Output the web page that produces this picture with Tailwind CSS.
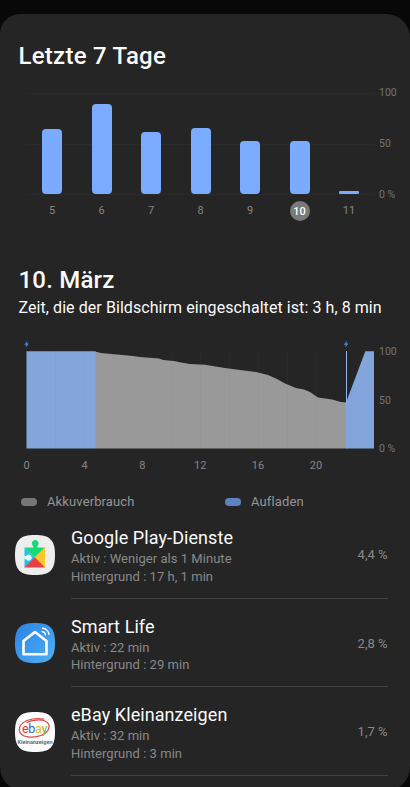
<!DOCTYPE html>
<html lang="de">
  <head>
    <meta charset="UTF-8" />
    <meta name="viewport" content="width=device-width, initial-scale=1.0" />
    <title>Akkuverbrauch</title>
    <script src="https://cdn.jsdelivr.net/npm/@tailwindcss/browser@4"></script>
  </head>
  <body class="bg-[#080808] font-['Roboto',sans-serif] text-[#fafafa]">
    <div class="h-[787px] w-[410px] overflow-hidden pt-[14px]">
      <main class="h-[777px] rounded-[24px] rounded-tl-[20px] bg-[#252525] pt-[26px]">
        <h1 class="pl-[18.5px] text-[24px] leading-8 font-medium tracking-[0.26px]">Letzte 7 Tage</h1>

        <!-- Last 7 days -->
        <section class="mt-[21px] h-[171px]">
          <div class="flex h-[102px]">
            <div class="ml-[27px] flex w-[347px] items-end justify-between border-y border-[#2a2a2a] bg-[linear-gradient(#2a2a2a,#2a2a2a)] bg-[length:100%_1px] bg-center bg-no-repeat pr-[15px] pl-[15px]">
              <div class="h-[65px] w-5 rounded-[4px] bg-[#7aabff]"></div>
              <div class="h-[90px] w-5 rounded-[4px] bg-[#7aabff]"></div>
              <div class="h-[62px] w-5 rounded-[4px] bg-[#7aabff]"></div>
              <div class="h-[66px] w-5 rounded-[4px] bg-[#7aabff]"></div>
              <div class="h-[53px] w-5 rounded-[4px] bg-[#7aabff]"></div>
              <div class="h-[53px] w-5 rounded-[4px] bg-[#7aabff]"></div>
              <div class="h-[3px] w-5 rounded-[1px] bg-[#7aabff]"></div>
            </div>
            <div class="-my-[7px] ml-[5px] flex flex-col justify-between text-[10.5px] leading-[14px] text-[#747474]">
              <span>100</span>
              <span>50</span>
              <span>0 %</span>
            </div>
          </div>
          <div class="mt-[5px] ml-[42px] flex w-[317px] items-center justify-between text-center text-[11px] leading-[21px] text-[#858585]">
            <span class="w-5">5</span>
            <span class="w-5">6</span>
            <span class="w-5">7</span>
            <span class="w-5">8</span>
            <span class="w-5">9</span>
            <span class="h-5 w-5 rounded-full bg-[#7a7a7a] font-medium text-white">10</span>
            <span class="w-5">11</span>
          </div>
        </section>

        <h2 class="pl-[18.5px] text-[24px] leading-8 font-medium tracking-[0.2px]">10. März</h2>
        <p class="pl-[18.5px] text-[16px] leading-6 tracking-[0.07px] whitespace-nowrap">Zeit, die der Bildschirm eingeschaltet ist: 3 h, 8 min</p>

        <!-- Battery level over the day -->
        <svg class="block" width="410" height="160" viewBox="0 320 410 160">
          <path stroke="#292929" d="M142.5 351V448M171.5 351V448M200.5 351V448M229.5 351V448M258.5 351V448M287.5 351V448M316.5 351V448" />
          <path fill="#999" d="M95 448.5V351.5L101 353L117 354.5L133 356L140 357L159 358.5L163 360L174 361L181 362.5L190 364L205 364.8L225 368L240 370L256 372L268 375L277 379L285 383.5L296 388L304 389.5L310 392L318 397.5L332 399.5L341 402L347 402.5V448.5Z" />
          <path fill="#84a5db" d="M26.5 351.2H95.5V448.5H26.5ZM346 448.5V402L347 400L356 376L365.3 351.2H374V448.5Z" />
          <path stroke="#8fb4ee" d="M346.5 351V404" />
          <path stroke="#000" stroke-opacity=".015" d="M55.5 351V448M84.5 354V448M113.5 354V448M142.5 357V448M171.5 361V448M200.5 365V448M229.5 368V448M258.5 373V448M287.5 385V448M316.5 397V448" />
          <g fill="#4b87cf">
            <path d="M27.5 340.8L24.2 344.8H26.2L25.7 347.6L29 343.6H27Z" />
            <path d="M347 340.8L343.7 344.8H345.7L345.2 347.6L348.5 343.6H346.5Z" />
          </g>
          <g fill="#747474" font-size="10.5">
            <text x="379" y="355">100</text>
            <text x="379" y="403.5">50</text>
            <text x="379" y="452">0 %</text>
          </g>
          <g fill="#858585" font-size="11" text-anchor="middle">
            <text x="26.5" y="469">0</text>
            <text x="84.5" y="469">4</text>
            <text x="142.3" y="469">8</text>
            <text x="200.2" y="469">12</text>
            <text x="258" y="469">16</text>
            <text x="316" y="469">20</text>
          </g>
        </svg>

        <div class="flex h-[30px] items-center pt-[14px] pl-[20.5px] text-[13px] leading-4 tracking-[0.12px] text-[#959595]">
          <span class="h-2 w-4 rounded-full bg-[#777]"></span>
          <span class="ml-[10.5px] w-[177.5px]">Akkuverbrauch</span>
          <span class="h-2 w-4 rounded-full bg-[#5d82c2]"></span>
          <span class="ml-[10.5px]">Aufladen</span>
        </div>

        <!-- Apps -->
        <ul>
          <li class="flex h-[88.5px] pr-[22.5px] pl-[14.5px]">
            <svg class="mt-[24.5px] h-10 w-10 shrink-0" viewBox="0 0 40 40">
              <path fill="#eee" d="M20 0C35 0 40 5 40 20S35 40 20 40S0 35 0 20S5 0 20 0Z" />
              <path fill="#22bfe6" d="M9.5 12.5L20 22.5L9.5 33Z" />
              <path fill="#16d977" d="M9.5 12.5H18.2V11.2A3.4 3.4 0 1 1 22.2 11.2V12.5H30L20 22.5Z" />
              <path fill="#ffc629" d="M30 12.5V33L19.5 22.5Z" />
              <path fill="#e93d4a" d="M9.5 32.5L19.8 22.2L30 32.5Z" />
              <path fill="#e6fbff" d="M9.3 21H11A3.1 3.1 0 1 1 11 24.2H9.3Z" />
            </svg>
            <div class="ml-[16.5px] flex flex-1 border-b border-[#414141] pt-4">
              <div class="flex-1">
                <h3 class="text-[18px] leading-6 tracking-[0.08px]">Google Play-Dienste</h3>
                <p class="text-[13px] leading-[17.7px] tracking-[0.04px] text-[#898989]">Aktiv : Weniger als 1 Minute</p>
                <p class="text-[13px] leading-[17.7px] tracking-[0.04px] text-[#898989]">Hintergrund : 17 h, 1 min</p>
              </div>
              <span class="mt-[21px] text-[13px] leading-4 text-[#898989]">4,4 %</span>
            </div>
          </li>
          <li class="flex h-[88.5px] pr-[22.5px] pl-[14.5px]">
            <svg class="mt-[24.5px] h-10 w-10 shrink-0" viewBox="0 0 40 40">
              <defs>
                <linearGradient id="smart" x1="0" y1="0" x2="1" y2="1">
                  <stop offset="0" stop-color="#2b83e6" />
                  <stop offset="1" stop-color="#4fb0f3" />
                </linearGradient>
              </defs>
              <path fill="url(#smart)" d="M20 0C35 0 40 5 40 20S35 40 20 40S0 35 0 20S5 0 20 0Z" />
              <path fill="none" stroke="#fff" stroke-width="2.6" stroke-linejoin="round" d="M8.5 18L20 9L31.5 18V31.2H8.5Z" />
              <g fill="none" stroke="#fff" stroke-width="1.4" stroke-linecap="round">
                <path d="M27.5 5.3A7 7 0 0 1 34 11.3" />
                <path d="M27 8.6A4 4 0 0 1 30.5 11.8" />
              </g>
            </svg>
            <div class="ml-[16.5px] flex flex-1 border-b border-[#414141] pt-4">
              <div class="flex-1">
                <h3 class="text-[18px] leading-6 tracking-[0.08px]">Smart Life</h3>
                <p class="text-[13px] leading-[17.7px] tracking-[0.04px] text-[#898989]">Aktiv : 22 min</p>
                <p class="text-[13px] leading-[17.7px] tracking-[0.04px] text-[#898989]">Hintergrund : 29 min</p>
              </div>
              <span class="mt-[21px] text-[13px] leading-4 text-[#898989]">2,8 %</span>
            </div>
          </li>
          <li class="flex h-[88.5px] pr-[22.5px] pl-[14.5px]">
            <svg class="mt-[24.5px] h-10 w-10 shrink-0" viewBox="0 0 40 40">
              <path fill="#fcfcfc" d="M20 0C35 0 40 5 40 20S35 40 20 40S0 35 0 20S5 0 20 0Z" />
              <path fill="none" stroke="#dc4a4a" stroke-width="1.2" stroke-linecap="round" d="M29 7C17 5 4 9.500 4.300 18C4.800 26 19 26.500 27 23C35 19.500 36.500 12 30 9C25 7 17 8 12 10.500" />
              <text y="20.5" font-size="12.5" font-weight="400" letter-spacing="-.3"><tspan x="7" fill="#e2373f">e</tspan><tspan fill="#2d67c4">b</tspan><tspan fill="#efb21c">a</tspan><tspan fill="#83b735">y</tspan></text>
              <text x="20" y="32" font-size="5.6" font-weight="500" fill="#555" text-anchor="middle">Kleinanzeigen</text>
            </svg>
            <div class="ml-[16.5px] flex flex-1 border-b border-[#414141] pt-4">
              <div class="flex-1">
                <h3 class="text-[18px] leading-6 tracking-[0.08px]">eBay Kleinanzeigen</h3>
                <p class="text-[13px] leading-[17.7px] tracking-[0.04px] text-[#898989]">Aktiv : 32 min</p>
                <p class="text-[13px] leading-[17.7px] tracking-[0.04px] text-[#898989]">Hintergrund : 3 min</p>
              </div>
              <span class="mt-[21px] text-[13px] leading-4 text-[#898989]">1,7 %</span>
            </div>
          </li>
        </ul>
      </main>
    </div>
  </body>
</html>
